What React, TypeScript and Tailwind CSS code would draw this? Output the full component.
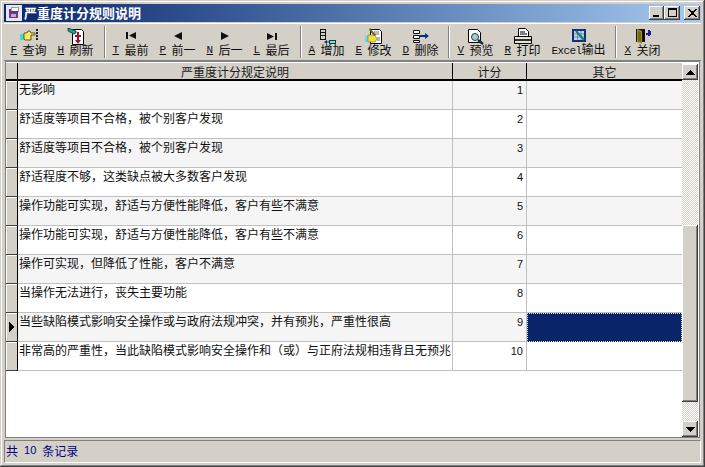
const font = { fontFamily: '"Noto Sans CJK SC", "Liberation Sans", sans-serif' };
const mono = { fontFamily: '"Liberation Mono", monospace' };
const digits = { fontFamily: '"Liberation Sans", sans-serif' };

const raised = "shadow-[inset_-1px_-1px_0_#404040,inset_1px_1px_0_#fff,inset_-2px_-2px_0_#808080]";

const rows = [
  { text: "无影响", score: 1 },
  { text: "舒适度等项目不合格，被个别客户发现", score: 2 },
  { text: "舒适度等项目不合格，被个别客户发现", score: 3 },
  { text: "舒适程度不够，这类缺点被大多数客户发现", score: 4 },
  { text: "操作功能可实现，舒适与方便性能降低，客户有些不满意", score: 5 },
  { text: "操作功能可实现，舒适与方便性能降低，客户有些不满意", score: 6 },
  { text: "操作可实现，但降低了性能，客户不满意", score: 7 },
  { text: "当操作无法进行，丧失主要功能", score: 8 },
  { text: "当些缺陷模式影响安全操作或与政府法规冲突，并有预兆，严重性很高", score: 9 },
  { text: "非常高的严重性，当此缺陷模式影响安全操作和（或）与正府法规相违背且无预兆", score: 10 },
];

function Sep({ className }: { className: string }) {
  return <div className={`w-[2px] h-[32px] border-l border-l-[#808080] border-r border-r-white shrink-0 ${className}`} />;
}

function Tool({ hot, label, w = "w-[47px]", children }: { hot?: string; label: React.ReactNode; w?: string; children: React.ReactNode }) {
  return (
    <div className={`${w} h-[36px] flex flex-col items-center shrink-0`}>
      <div className="h-[22px] w-[22px] pt-[4px] shrink-0">{children}</div>
      <div className="h-[16px] -mt-[4px] flex items-center gap-[6px] text-[12px] leading-[16px] text-[#101010] whitespace-nowrap">
        {hot && <span className="underline text-[11px] w-[6px]" style={mono}>{hot}</span>}
        <span>{label}</span>
      </div>
    </div>
  );
}

const Svg = ({ children }: { children: React.ReactNode }) => (
  <svg width="22" height="18" viewBox="0 0 22 18" className="block">{children}</svg>
);

function TitleIcon() {
  return (
    <svg width="16" height="16" viewBox="0 0 16 16" shapeRendering="crispEdges" className="shrink-0">
      <rect x="0" y="0" width="16" height="16" fill="#e8e4f0" />
      <rect x="3" y="4" width="9" height="9" fill="#6a3a8a" />
      <rect x="5" y="2" width="7" height="4" fill="#fff" stroke="#404040" strokeWidth="0.5" />
      <rect x="5" y="9" width="5" height="3" fill="#c8a8d8" />
    </svg>
  );
}

function WinButton({ children, className = "" }: { children: React.ReactNode; className?: string }) {
  return (
    <div className={`h-[14px] bg-[#d4d0c8] flex items-center justify-center ${raised} ${className}`}>
      <svg width="11" height="10" viewBox="0 0 11 10" shapeRendering="crispEdges">{children}</svg>
    </div>
  );
}

function ScrollButton({ up }: { up?: boolean }) {
  return (
    <div className={`w-[16px] h-[16px] bg-[#d4d0c8] flex items-center justify-center shrink-0 ${raised}`}>
      <svg width="9" height="5" viewBox="0 0 9 5" shapeRendering="crispEdges">
        <path d={up ? "M4 0h1v1h1v1h1v1h1v1h1v1H0V4h1V3h1V2h1V1h1z" : "M0 0h9v1H8v1H7v1H6v1H5v1H4V4H3V3H2V2H1V1H0z"} fill="#000" />
      </svg>
    </div>
  );
}

const checker = "bg-[repeating-conic-gradient(#d4d0c8_0_25%,#fff_0_50%)] bg-[length:2px_2px]";

export default function App() {
  return (
    <div lang="zh-CN" className="w-[705px] h-[467px] overflow-hidden bg-[#d4d0c8] flex flex-col p-[4px] shadow-[inset_-1px_-1px_0_#404040,inset_1px_1px_0_#d4d0c8,inset_-2px_-2px_0_#808080,inset_2px_2px_0_#fff]" style={font}>
      {/* title bar */}
      <div className="h-[18px] shrink-0 flex items-center pl-[2px] pr-[1px] bg-gradient-to-r from-[#0a246a] to-[#a6caf0]">
        <TitleIcon />
        <span className="ml-[2px] text-[13px] font-bold text-white leading-[18px]">严重度计分规则说明</span>
        <div className="ml-auto flex items-center">
          <WinButton className="w-[15px]"><rect x="2" y="7" width="6" height="2" fill="#000" /></WinButton>
          <WinButton className="w-[16px]"><path d="M1 0h9v9H1zM2 2v6h7V2z" fill="#000" fillRule="evenodd" /></WinButton>
          <WinButton className="w-[16px] ml-[4px]"><path d="M1 1h2v1h1v1h3V2h1V1h2v1H9v1H8v1H7v2h1v1h1v1h1v1H8V8H7V7H4v1H3v1H1V8h1V7h1V6h1V4H3V3H2V2H1z" fill="#000" /></WinButton>
        </div>
      </div>

      {/* toolbar */}
      <div className="h-[38px] mt-[1px] shrink-0 flex items-center pl-[1px] border-t border-t-white border-b border-b-[#808080]">
        <Tool hot="F" label="查询">
          <Svg>
            <rect x="2" y="6" width="4" height="6" fill="#48d8c8" />
            <path d="M6 5h3l1-2h2l1 2h4v2h-4v5H7l-1-1z" fill="#ffe860" stroke="#3a3a00" strokeWidth="0.8" />
            <path d="M18 1h2v2h-2zM18 4h2v2h-2zM18 7h2v2h-2zM18 10h2v2h-2z" fill="#202020" />
          </Svg>
        </Tool>
        <Tool hot="H" label="刷新">
          <Svg>
            <path d="M7.5 1.5h9l2 2v13h-11z" fill="#fff" stroke="#000" />
            <path d="M3 0l8 3v2l-2 1-6-3z" fill="#20a090" stroke="#003838" strokeWidth="0.8" />
            <path d="M12 4h2v3h2v2h-2v3h2l-3 4-3-4h2V9h-2V7h2z" fill="#a01028" />
          </Svg>
        </Tool>
        <Sep className="ml-[5px] mr-[1px]" />
        <Tool hot="T" label="最前">
          <Svg><path d="M6 4h2v7H6zM16 4v7l-7-3.5z" fill="#101010" /></Svg>
        </Tool>
        <Tool hot="P" label="前一">
          <Svg><path d="M15 4v8l-8-4z" fill="#101010" /></Svg>
        </Tool>
        <Tool hot="N" label="后一">
          <Svg><path d="M7 4v8l8-4z" fill="#101010" /></Svg>
        </Tool>
        <Tool hot="L" label="最后">
          <Svg><path d="M6 5v7l7-3.5zM14 5h2v7h-2z" fill="#101010" /></Svg>
        </Tool>
        <Sep className="ml-[5px] mr-[1px]" />
        <Tool hot="A" label="增加">
          <Svg>
            <path d="M4 1h6v11H4zM5 2v2h4V2zM5 5v2h4V5zM5 8v3h4V8z" fill="#101010" fillRule="evenodd" />
            <path d="M8 14l3-2v1.5h3v1H11V16z" fill="#003a80" />
            <rect x="13.5" y="12.5" width="6" height="3" fill="#88d8c8" stroke="#004040" />
          </Svg>
        </Tool>
        <Tool hot="E" label="修改">
          <Svg>
            <path d="M7.5 1.5h9l2 2v12h-11z" fill="#fff" stroke="#000" />
            <path d="M11 4h5M12 6h4M14 12h3M14 10h3" stroke="#707070" />
            <rect x="2" y="8" width="3" height="6" fill="#60e0e0" />
            <path d="M5 7h7l2 4-2 3H5z" fill="#f0e040" stroke="#707020" strokeWidth="0.6" />
            <path d="M7 0l6 7-2 1-5-6z" fill="#706020" />
          </Svg>
        </Tool>
        <Tool hot="D" label="删除">
          <Svg>
            <path d="M3.5 2.5h6v3h-6zM3.5 7.5h6v3h-6zM3.5 12.5h6v2h-6z" fill="#fff" stroke="#101010" />
            <path d="M10 7h5V5l4 3-4 3V9h-5z" fill="#003080" />
          </Svg>
        </Tool>
        <Sep className="ml-[4px] mr-[2px]" />
        <Tool hot="V" label="预览">
          <Svg>
            <path d="M3.5 1.5h9l3 3v10h-12z" fill="#fff" stroke="#000" />
            <circle cx="10" cy="9" r="3.5" fill="#a8ccd0" stroke="#204040" />
            <path d="M13 12l5 4" stroke="#103030" strokeWidth="2.5" />
          </Svg>
        </Tool>
        <Tool hot="R" label="打印">
          <Svg>
            <path d="M6.5 0.5h7l3 3v5h-10z" fill="#fff" stroke="#000" />
            <path d="M8 4h5M8 6h7" stroke="#000" />
            <path d="M2.5 8.5h17v7h-17z" fill="#e8e4dc" stroke="#000" />
            <rect x="3" y="11" width="16" height="2" fill="#303030" />
          </Svg>
        </Tool>
        <Tool label={<><span className="text-[11px] tracking-[-0.6px]" style={mono}>Excel</span>输出</>} w="w-[65px]">
          <Svg>
            <rect x="4" y="1" width="14" height="13" fill="#182c78" />
            <path d="M6 3h10v9H6z" fill="#c0d8e8" />
            <path d="M6 6h10M6 9h10M9.5 3v9M13 3v9" stroke="#5070a0" strokeWidth="0.7" />
            <path d="M8 3l8 9" stroke="#108070" strokeWidth="2" />
          </Svg>
        </Tool>
        <Sep className="ml-[4px] mr-[2px]" />
        <Tool hot="X" label="关闭">
          <Svg>
            <path d="M4 1h9v13H4z" fill="#101010" />
            <path d="M5 1l5 2v13l-5-2z" fill="#a09020" />
            <path d="M6 3l3 1v10l-3-1z" fill="#786810" />
            <rect x="14" y="5" width="2" height="2" fill="#1820a0" />
            <path d="M16 2h2v1h1v4h-1v1h-2z" fill="#1820a0" />
          </Svg>
        </Tool>
      </div>

      {/* grid */}
      <div className="h-[377px] ml-[1px] mr-[1px] shrink-0 flex bg-white border border-[#808080] pr-[1px]">
        <div className="flex-1 min-w-0 flex flex-col pt-[1px] overflow-hidden">
          <div className="h-[18px] shrink-0 flex bg-[#d4d0c8] border-b-2 border-b-black text-[12px] leading-[18px] text-[#202020]">
            <div className="w-[12px] shrink-0 border-r border-r-black" />
            <div className="w-[435px] shrink-0 text-center border-r border-r-black">严重度计分规定说明</div>
            <div className="w-[74px] shrink-0 text-center border-r border-r-black">计分</div>
            <div className="flex-1 text-center">其它</div>
          </div>
          {rows.map((row, i) => (
            <div key={row.score} className={`h-[29px] shrink-0 flex text-[12px] leading-[16px] text-[#101010] ${i % 2 === 0 ? "bg-[#f5f5f5]" : "bg-white"}`}>
              <div className="w-[12px] shrink-0 bg-[#d4d0c8] border-r border-r-black border-b border-b-[#404040] shadow-[inset_1px_1px_0_#fff] flex items-center justify-center">
                {row.score === 9 && (
                  <svg width="6" height="10" viewBox="0 0 6 10" shapeRendering="crispEdges">
                    <path d="M0 0h1v1h1v1h1v1h1v1h1v2H4v1H3v1H2v1H1v1H0z" fill="#000" />
                  </svg>
                )}
              </div>
              <div className="w-[435px] shrink-0 pl-[1px] border-r border-r-[#c0c0c0] border-b border-b-[#c0c0c0] whitespace-nowrap">{row.text}</div>
              <div className="w-[74px] shrink-0 pr-[3px] pt-[1px] text-right text-[11px] border-r border-r-[#c0c0c0] border-b border-b-[#c0c0c0]" style={digits}>{row.score}</div>
              {row.score === 9 ? (
                <div className="flex-1 bg-[#0a246a] outline-1 outline-dotted outline-offset-[-1px] outline-[#e8e8d0]" />
              ) : (
                <div className="flex-1 border-b border-b-[#c0c0c0]" />
              )}
            </div>
          ))}
        </div>
        <div className="w-[16px] shrink-0 flex flex-col mt-[2px]">
          <ScrollButton up />
          <div className={`h-[145px] shrink-0 ${checker}`} />
          <div className={`flex-1 bg-[#d4d0c8] ${raised}`} />
          <div className={`h-[19px] shrink-0 ${checker}`} />
          <ScrollButton />
        </div>
      </div>

      {/* status bar */}
      <div className="h-[23px] mt-[2px] shrink-0 flex items-center pl-[1px] pb-[2px] border border-t-[#808080] border-l-[#808080] border-r-white border-b-white text-[12px] text-[#000080] whitespace-pre">
        共<span className="text-[11px] mx-[6px]" style={digits}>10</span>条记录
      </div>
    </div>
  );
}
